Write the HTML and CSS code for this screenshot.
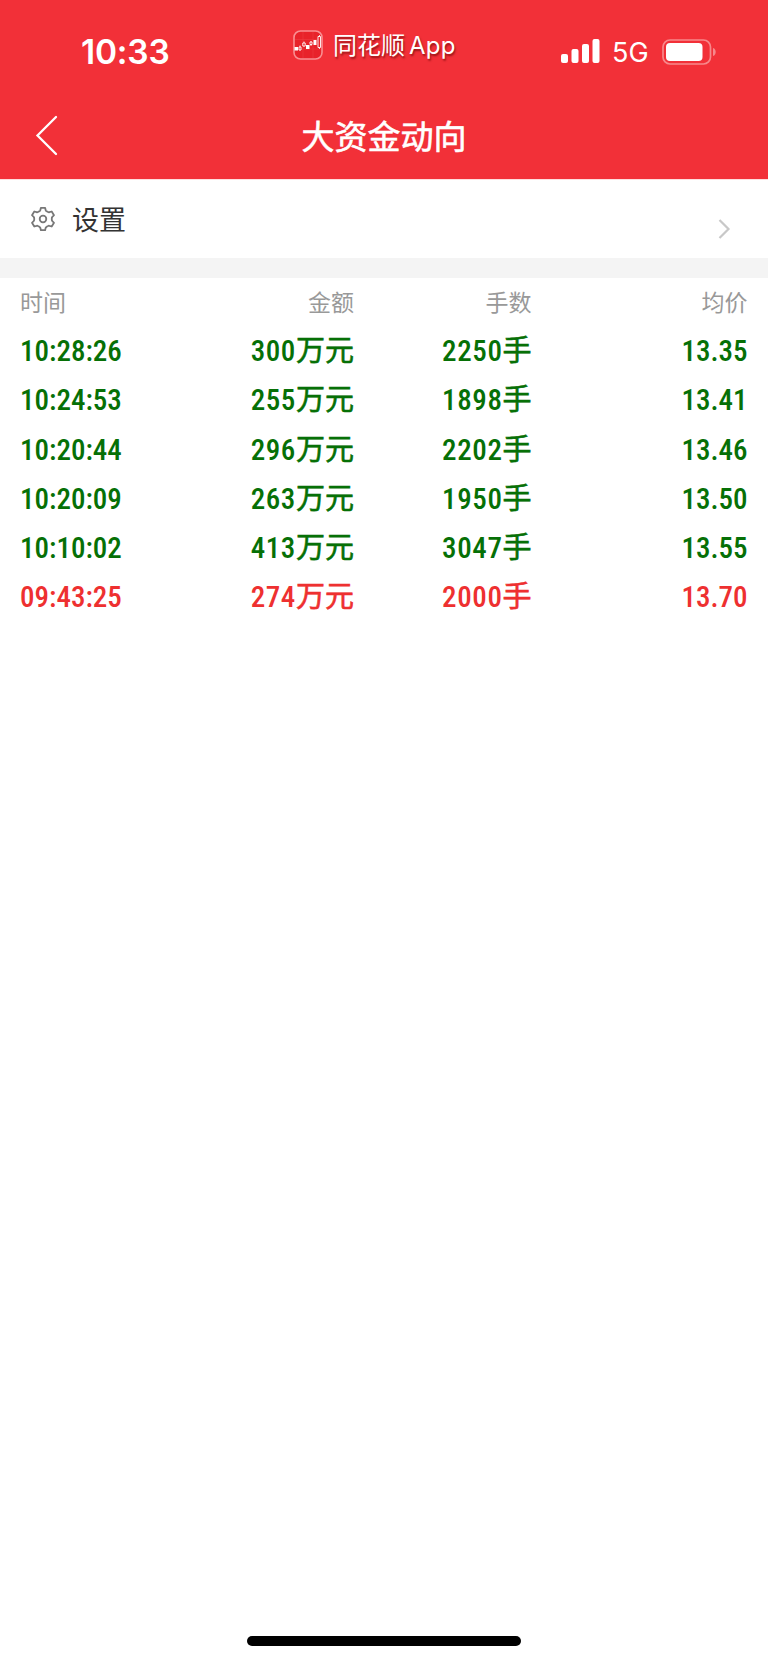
FILE: index.html
```html
<!DOCTYPE html>
<html lang="zh-CN">
<head>
  <meta charset="UTF-8">
  <meta name="viewport" content="width=device-width, initial-scale=1.0">
  <title>大资金动向</title>
  <link rel="stylesheet" href="styles.css">
</head>
<body>
<header class="top">
  <div class="status">
    <div class="clock">10:33</div>
    <div class="app">
      <svg class="app-icon" width="30" height="30" viewBox="0 0 30 30" fill="none">
        <rect x="1" y="1" width="28" height="28" rx="6.5" fill="#e8222a" stroke="#f98f92" stroke-width="1.6"/>
        <path d="M2 9.5h26M2 19h26M10 2v26M20 2v26" stroke="#ee4147" stroke-width=".5"/>
        <path d="M1.500 17h3.500v3.500H1.500zM13 15h3.500v4H13zM20.500 10h3v5h-3z" fill="#fff"/>
        <path d="M7 15.500v5M11 11.500v5M18 11v5M26.500 5v14" stroke="#fff" stroke-width=".8"/>
        <path d="M6 17h2v3H6zM9.800 13h2.400v3H9.800zM17 12h2v2.500h-2zM25 6.500h2.500v11H25z" fill="#e8222a" stroke="#fff" stroke-width=".9"/>
      </svg>
      <span>同花顺<span class="latin">App</span></span>
    </div>
    <div class="signal">
      <svg width="39" height="26" viewBox="0 0 39 26" fill="#fff">
        <rect x="0" y="15" width="7" height="9" rx="2"/>
        <rect x="10.500" y="10" width="7" height="14" rx="2"/>
        <rect x="21" y="5" width="7" height="19" rx="2"/>
        <rect x="31.500" y="0" width="7" height="24" rx="2"/>
      </svg>
      <span class="net">5G</span>
      <svg width="55" height="26" viewBox="0 0 55 26" fill="none">
        <rect x="1" y="1" width="47.500" height="24" rx="7" stroke="#f7888b" stroke-width="1.700"/>
        <rect x="4" y="4" width="36.500" height="18" rx="4" fill="#fff"/>
        <path d="M51 9c3.600 1 3.600 7 0 8z" fill="#f7888b"/>
      </svg>
    </div>
  </div>
  <div class="nav">
    <svg class="back" width="24" height="42" viewBox="0 0 24 42" fill="none" stroke="#fff" stroke-width="2.300" stroke-linecap="round">
      <path d="M21 2L2.500 20.500L21 39"/>
    </svg>
    <h1>大资金动向</h1>
  </div>
</header>

<div class="setting">
  <svg class="gear" width="26" height="26" viewBox="0 0 26 26" fill="none" stroke="#777" stroke-width="1.800" stroke-linejoin="round">
    <path d="M10.900 1.800h4.200l.6 2.400q.2.700.9 1l1.500.9q.6.400 1.300.1l2.300-.7 2.300 3.700-1.700 1.800q-.5.500-.5 1.200v1.600q0 .7.500 1.200l1.700 1.800-2.300 3.700-2.300-.7q-.7-.3-1.300.1l-1.500.9q-.7.300-.9 1l-.6 2.400h-4.200l-.6-2.400q-.2-.7-.9-1l-1.500-.9q-.6-.4-1.300-.1l-2.300.7L2 16.800l1.700-1.800q.5-.5.5-1.200v-1.600q0-.7-.5-1.200L2 9.200l2.300-3.700 2.300.7q.7.300 1.300-.1l1.500-.9q.7-.3.900-1z"/>
    <circle cx="13" cy="13" r="3.300"/>
  </svg>
  <span class="setting-name">设置</span>
  <svg class="more" width="13" height="20" viewBox="0 0 13 20" fill="none" stroke="#c8c8c8" stroke-width="2.200">
    <path d="M1.500 1L10.500 10L1.500 19"/>
  </svg>
</div>

<div class="list">
  <div class="row head"><span>时间</span><span>金额</span><span>手数</span><span>均价</span></div>
  <div class="row down"><span>10:28:26</span><span>300<b>万元</b></span><span>2250<b>手</b></span><span>13.35</span></div>
  <div class="row down"><span>10:24:53</span><span>255<b>万元</b></span><span>1898<b>手</b></span><span>13.41</span></div>
  <div class="row down"><span>10:20:44</span><span>296<b>万元</b></span><span>2202<b>手</b></span><span>13.46</span></div>
  <div class="row down"><span>10:20:09</span><span>263<b>万元</b></span><span>1950<b>手</b></span><span>13.50</span></div>
  <div class="row down"><span>10:10:02</span><span>413<b>万元</b></span><span>3047<b>手</b></span><span>13.55</span></div>
  <div class="row up"><span>09:43:25</span><span>274<b>万元</b></span><span>2000<b>手</b></span><span>13.70</span></div>
</div>

<div class="home-bar"></div>
</body>
</html>
```
FILE: styles.css
```css
* { box-sizing: border-box; }
body {
  margin: 0;
  height: 1663px;
  display: flex;
  flex-direction: column;
  background: #fff;
  font-family: Roboto, "Noto Sans CJK SC", sans-serif;
}
svg { display: block; flex: none; }
.top {
  height: 179px;
  background: #f23038;
  color: #fff;
}
.status {
  height: 92px;
  display: grid;
  grid-template-columns: 293px 1fr 207px;
}
.clock {
  padding: 31px 0 0 81px;
  font: 600 33.5px/42px Inter, sans-serif;
  letter-spacing: -0.2px;
}
.app {
  display: flex;
  gap: 10px;
  padding-top: 30px;
  font: 24px/28px "Noto Sans CJK SC", sans-serif;
  text-shadow: 1px 2px 2px rgba(90, 0, 0, 0.6);
}
.latin {
  margin-left: 4px;
  font-family: Inter, sans-serif;
  letter-spacing: 0.3px;
}
.signal {
  display: flex;
  padding-top: 39px;
}
.net {
  width: 62px;
  padding-left: 12px;
  font: 27px/27px Inter, sans-serif;
}
.nav {
  height: 87px;
  display: grid;
  grid-template-columns: 100px 1fr 100px;
  align-items: center;
}
.back { margin: 0 0 0 35px; }
h1 {
  margin: 5px 0 0;
  text-align: center;
  font-size: 33px;
  font-weight: 400;
  line-height: 44px;
  -webkit-text-stroke: 0.6px #fff;
}
.setting {
  height: 99px;
  display: flex;
  padding: 0 37px 0 30px;
  border-top: 1px solid #fdd;
  border-bottom: 20px solid #f4f4f4;
}
.gear { margin-top: 26px; }
.setting-name {
  flex: 1;
  margin: 21px 0 0 16px;
  font-size: 27px;
  line-height: 40px;
  color: #333;
}
.more { margin-top: 39px; }
.list { flex: 1; }
.row {
  height: 49.2px;
  display: grid;
  grid-template-columns: 170px 164px 177.5px 1fr;
  padding: 0 20.5px 0 20px;
  font-size: 29px;
  font-weight: 500;
  font-stretch: 82%;
  line-height: 48px;
  letter-spacing: 0.6px;
  text-align: right;
}
.row span:first-child {
  text-align: left;
  letter-spacing: 0;
}
.row span:last-child { letter-spacing: 0; }
.row b {
  font-weight: 400;
  letter-spacing: 0;
  -webkit-text-stroke: 0.6px currentColor;
}
.row.head {
  font-size: 23px;
  font-weight: 400;
  line-height: 51px;
  letter-spacing: 0;
  color: #999;
}
.down { color: #067006; }
.up { color: #ee3030; }
.home-bar {
  width: 274px;
  height: 10px;
  margin: 0 auto 17px;
  border-radius: 5px;
  background: #000;
}
```
